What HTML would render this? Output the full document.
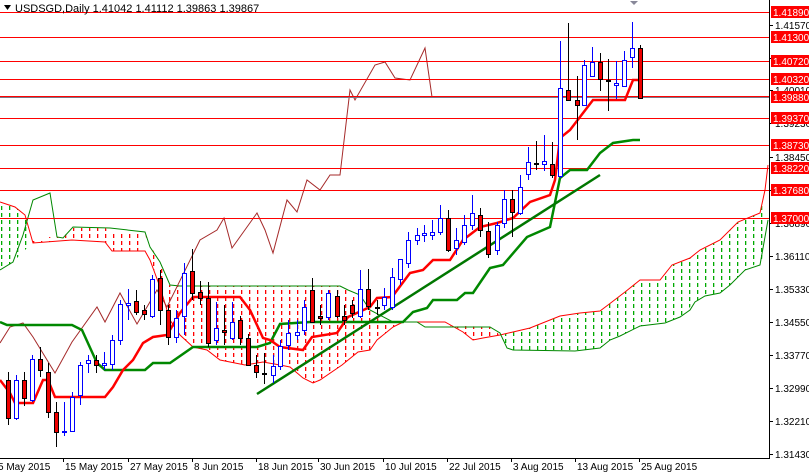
<!DOCTYPE html>
<html><head><meta charset="utf-8">
<style>
html,body{margin:0;padding:0;background:#fff;width:809px;height:475px;overflow:hidden}
svg{display:block;font-family:"Liberation Sans",sans-serif}
</style></head><body>
<svg id="s" width="809" height="475" viewBox="0 0 809 475" xmlns="http://www.w3.org/2000/svg">
<defs>
<clipPath id="cg">
<polygon points="0,202 15,207 25,215 33,242 13,262 0,270"/>
<polygon points="500,335 513,332 530,328 560,316 580,313 600,311 608,305 625,292 640,280 660,280 672,265 690,258 700,250 720,240 738,222 760,213 765,190 768,165 768,220 762,260 745,270 730,285 720,293 705,296 695,302 680,317 665,323 640,326 620,336 610,340 600,348 575,351 513,350 507,348"/>
</clipPath>
<clipPath id="cr">
<polygon points="33,240 50,237 63,237 72,228 105,228 112,232 145,232 145,251 112,251 105,242 72,240 33,243"/>
<polygon points="145,232 150,245 160,262 168,285 180,286 340,286 350,292 362,300 370,310 380,320 393,322 403,322 393,327 377,340 370,350 358,352 342,365 320,380 313,383 303,378 290,367 280,365 263,362 245,365 220,360 207,350 193,347 180,335 170,320 160,287 150,260"/>
<polygon points="450,323 463,332 473,340 483,338 500,335 490,327 463,326 450,327"/>
</clipPath>
</defs>
<g id="hg" clip-path="url(#cg)" fill="#00aa00"></g>
<g id="hr" clip-path="url(#cr)" fill="#ff0000"></g>
<g fill="none" stroke-width="1">
<polyline stroke="#f00" points="0,202 15,207 25,215 33,243 72,240 105,242 112,251 145,251 150,260 160,287 170,320 180,335 193,347 207,350 220,360 245,365 263,362 280,365 290,367 303,378 313,383 320,380 342,365 358,352 370,350 377,340 393,327 403,322 445,322 463,332 473,340 483,338 500,335 513,332 530,328 560,316 580,313 600,311 608,305 625,292 640,280 660,280 672,265 690,258 700,250 720,240 738,222 760,213 765,190 768,165"/>
<polyline stroke="#080" points="0,270 13,262 23,235 33,200 50,193 57,237 63,238 73,227 110,228 145,232 150,247 160,262 170,285 180,286 340,286 348,290 360,295 370,310 393,322 417,322 425,327 490,327 500,333 507,348 513,350 575,351 600,348 610,340 620,336 640,326 665,323 680,317 690,310 695,302 705,296 720,293 730,285 745,270 760,265 768,220"/>
<polyline stroke="#a52a2a" points="0,343 10,327 23,323 33,337 55,373 72,342 97,307 105,322 120,293 137,324 157,290 167,307 200,240 217,230 224,218 232,248 257,213 265,230 273,253 287,200 297,212 307,180 320,190 330,175 340,175 350,90 355,100 375,65 385,62 395,78 410,80 425,48 432,97"/>
</g>
<g id="hl" stroke="#f00" stroke-width="1">
<line x1="0" y1="12.5" x2="769" y2="12.5"/><line x1="0" y1="37.5" x2="769" y2="37.5"/><line x1="0" y1="61.5" x2="769" y2="61.5"/><line x1="0" y1="79.5" x2="769" y2="79.5"/><line x1="0" y1="118.5" x2="769" y2="118.5"/><line x1="0" y1="145.5" x2="769" y2="145.5"/><line x1="0" y1="168.5" x2="769" y2="168.5"/><line x1="0" y1="190.5" x2="769" y2="190.5"/><line x1="0" y1="218.5" x2="769" y2="218.5"/>
<line x1="0" y1="97.5" x2="769" y2="97.5" stroke="#778"/><line x1="0" y1="96.5" x2="769" y2="96.5"/>
</g>
<polyline fill="none" stroke="#080" stroke-width="2.5" points="0,322 7,325 72,325 82,330 97,363 105,370 145,370 153,363 170,363 193,347 257,347 270,343 280,324 310,322 403,322 413,312 427,308 433,300 457,300 465,293 473,293 490,268 503,265 527,237 550,227 560,178 570,170 587,170 600,153 613,143 633,140 640,140"/>
<line x1="257" y1="394" x2="600" y2="175" stroke="#070" stroke-width="2.5"/>
<polyline fill="none" stroke="#f00" stroke-width="2.5" points="0,380 10,393 15,403 33,403 43,380 48,380 55,397 105,397 113,387 123,370 133,360 143,343 153,337 167,335 180,313 193,297 240,297 250,310 263,338 270,340 280,347 303,350 312,337 337,333 348,317 370,307 377,298 392,297 410,273 423,270 433,260 450,260 463,240 480,227 497,223 513,218 530,202 550,195 555,180 560,138 570,130 593,100 625,100 633,80 640,80"/>
<g id="candles"></g>
<g id="axis" font-size="10" fill="#000"></g>
<g font-size="11" fill="#000"><polygon points="4,5 11,5 7.5,10" fill="#000"/><text x="15" y="12">USDSGD,Daily  1.41042 1.41112 1.39863 1.39867</text></g>
<polygon points="630,1 638,1 634,5" fill="#889"/>
</svg>
<script>
var NS="http://www.w3.org/2000/svg",s=document.getElementById('s');
function el(t,a,p){var e=document.createElementNS(NS,t);for(var k in a)e.setAttribute(k,a[k]);(p||s).appendChild(e);return e;}
var hg=document.getElementById('hg'),hr=document.getElementById('hr');
for(var x=1;x<770;x+=8){for(var y=150;y<400;y+=7){
el('rect',{x:x,y:y,width:1.3,height:4},hg);
el('rect',{x:x,y:y,width:1.3,height:4},hr);}}
var C=[[8,380,418,372,425],[16,418,380,375,420],[24,380,398,372,406],[32,400,359,355,402],[40,359,370,347,377],[48,372,412,363,418],[56,412,432,402,447],[64,432,431,402,436],[72,431,397,392,432],[80,395,365,362,405],[88,363,360,355,373],[96,360,365,355,373],[104,365,363,352,370],[112,364,340,335,370],[120,340,304,300,345],[128,305,303,289,320],[136,301,312,290,315],[144,310,314,305,320],[152,316,279,275,318],[160,278,310,270,325],[168,310,337,305,345],[176,337,318,310,343],[184,316,273,263,335],[192,271,293,249,300],[200,292,298,281,305],[208,298,343,282,347],[216,340,328,302,345],[224,330,332,305,345],[232,338,322,302,340],[240,320,338,316,345],[248,338,365,334,366],[256,365,372,355,378],[264,373,374,353,384],[273,375,366,355,383],[280,366,346,340,370],[288,345,333,320,350],[297,335,332,320,340],[304,330,307,300,335],[312,290,322,278,322],[320,316,318,305,325],[328,317,293,290,320],[337,296,316,290,318],[344,316,320,305,325],[352,305,313,300,318],[360,316,289,270,318],[368,289,306,269,310],[377,307,308,300,315],[384,305,297,288,310],[392,307,277,268,310],[400,279,259,265,285],[408,263,240,232,268],[417,240,235,228,245],[424,235,233,225,242],[432,235,232,220,240],[440,232,218,205,235],[448,218,250,210,252],[456,248,240,228,255],[464,242,225,215,245],[472,225,213,195,230],[480,215,230,208,237],[488,231,254,222,258],[497,250,225,222,255],[504,223,199,190,228],[512,199,212,190,237],[520,213,187,175,215],[528,174,162,147,180],[536,163,164,141,170],[544,164,161,135,171],[552,164,175,142,178],[560,176,88,41,178],[568,90,100,23,100],[577,100,105,76,140],[584,105,65,60,105],[592,76,62,47,76],[600,62,79,53,91],[608,80,81,59,111],[616,85,83,61,99],[624,86,60,51,86],[632,57,48,22,68],[640,48,98,45,98]];
var g=document.getElementById('candles');
C.forEach(function(c){var x=c[0],o=c[1],cl=c[2],h=c[3],l=c[4],up=cl<o,col=up?'#00f':'#000';
el('line',{x1:x+.5,y1:h,x2:x+.5,y2:l,stroke:col,'stroke-width':1},g);
var t=Math.min(o,cl),b=Math.max(o,cl);if(b-t<1)b=t+1;
if(up)el('rect',{x:x-1.5,y:t+.5,width:4,height:b-t,fill:'#fff',stroke:'#00f','stroke-width':1},g);
else if(Math.abs(o-cl)<2)el('rect',{x:x-2,y:t,width:5,height:2,fill:'#000'},g);
else el('rect',{x:x-1.5,y:t+.5,width:4,height:b-t,fill:'#e00',stroke:'#000','stroke-width':1},g);});
var a=document.getElementById('axis');
el('line',{x1:769.5,y1:0,x2:769.5,y2:458,stroke:'#000'},a);
el('line',{x1:0,y1:458.5,x2:770,y2:458.5,stroke:'#000'},a);
var sc=[[25,'1.41570'],[58,'1.40790'],[90,'1.40010'],[123,'1.39230'],[157,'1.38450'],[190,'1.37670'],[223,'1.36890'],[256,'1.36110'],[289,'1.35330'],[322,'1.34550'],[355,'1.33770'],[388,'1.32990'],[421,'1.32210'],[454,'1.31430']];
sc.forEach(function(v){el('line',{x1:769,y1:v[0]+.5,x2:773,y2:v[0]+.5,stroke:'#000'},a);var t=el('text',{x:775,y:v[0]+4},a);t.textContent=v[1];});
var rl=[[12,'1.41890'],[37,'1.41300'],[61,'1.40720'],[79,'1.40320'],[97,'1.39880'],[118,'1.39370'],[145,'1.38730'],[168,'1.38220'],[190,'1.37680'],[218,'1.37000']];
rl.forEach(function(v){el('rect',{x:771,y:v[0]-6,width:38,height:12,fill:'#f00'},a);var t=el('text',{x:773,y:v[0]+4,fill:'#fff'},a);t.textContent=v[1];});
var d=[[0,'5 May 2015'],[63,'15 May 2015'],[128,'27 May 2015'],[192,'8 Jun 2015'],[256,'18 Jun 2015'],[318,'30 Jun 2015'],[383,'10 Jul 2015'],[447,'22 Jul 2015'],[511,'3 Aug 2015'],[575,'13 Aug 2015'],[639,'25 Aug 2015']];
d.forEach(function(v){if(v[0]>0)el('line',{x1:v[0]+.5,y1:458,x2:v[0]+.5,y2:462,stroke:'#000'},a);var t=el('text',{x:v[0]?v[0]+2:-2,y:470},a);t.textContent=v[1];});
</script>
</body></html>
